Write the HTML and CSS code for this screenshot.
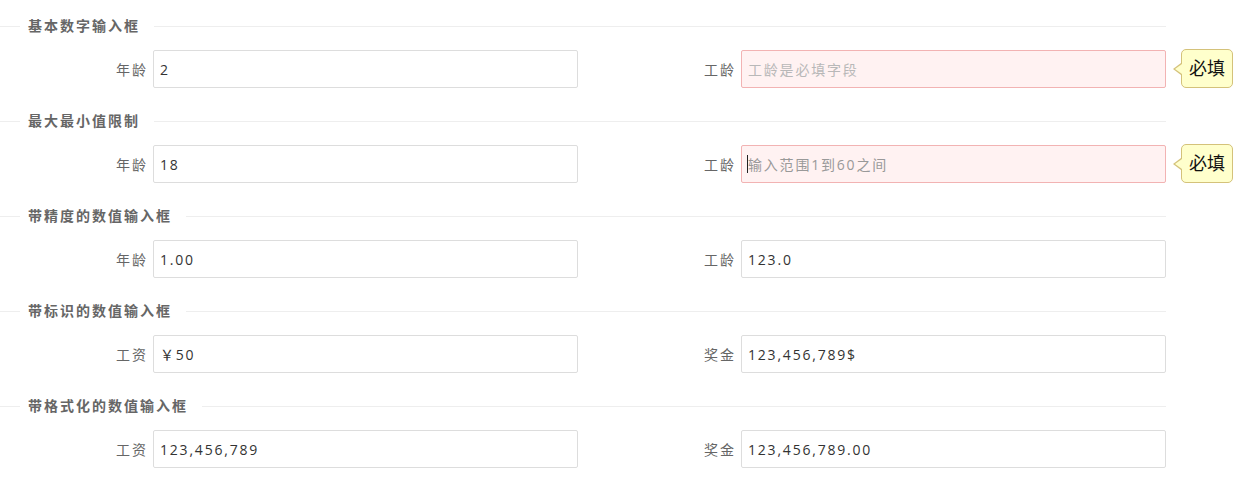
FILE: index.html
```html
<!DOCTYPE html>
<html lang="zh-CN">
<head>
    <meta charset="UTF-8">
    <title>数字输入框</title>
    <link rel="stylesheet" href="styles.css">
</head>
<body>
    <div id="page">
        <div class="title">基本数字输入框</div>
        <div class="row">
            <div class="item">
                <label>年龄</label>
                <div class="field"><input type="text" value="2"></div>
            </div>
            <div class="item">
                <label>工龄</label>
                <div class="field">
                    <input type="text" class="error" placeholder="工龄是必填字段">
                    <span class="tip">必填</span>
                </div>
            </div>
        </div>

        <div class="title">最大最小值限制</div>
        <div class="row">
            <div class="item">
                <label>年龄</label>
                <div class="field"><input type="text" value="18"></div>
            </div>
            <div class="item">
                <label>工龄</label>
                <div class="field">
                    <input type="text" class="error dark" placeholder="输入范围1到60之间">
                    <span class="caret"></span>
                    <span class="tip">必填</span>
                </div>
            </div>
        </div>

        <div class="title">带精度的数值输入框</div>
        <div class="row">
            <div class="item">
                <label>年龄</label>
                <div class="field"><input type="text" value="1.00"></div>
            </div>
            <div class="item">
                <label>工龄</label>
                <div class="field"><input type="text" value="123.0"></div>
            </div>
        </div>

        <div class="title">带标识的数值输入框</div>
        <div class="row">
            <div class="item">
                <label>工资</label>
                <div class="field"><input type="text" value="￥50"></div>
            </div>
            <div class="item">
                <label>奖金</label>
                <div class="field"><input type="text" value="123,456,789$"></div>
            </div>
        </div>

        <div class="title">带格式化的数值输入框</div>
        <div class="row">
            <div class="item">
                <label>工资</label>
                <div class="field"><input type="text" value="123,456,789"></div>
            </div>
            <div class="item">
                <label>奖金</label>
                <div class="field"><input type="text" value="123,456,789.00"></div>
            </div>
        </div>
    </div>
</body>
</html>
```

FILE: styles.css
```css
body
{
    margin: 0;
    font-family: "Open Sans", "Noto Sans CJK SC", sans-serif;
    font-size: 14px;
    color: #333;
    background: #fff;
}

#page
{
    width: 1166px;
    padding-top: 16px;
}

.title
{
    display: flex;
    align-items: center;
    height: 20px;
    line-height: 20px;
    font-size: 14px;
    letter-spacing: 2px;
    font-weight: bold;
    color: #666;
    margin-bottom: 14px;
}
.title::before
{
    content: "";
    width: 20px;
    border-top: 1px solid #eee;
    margin-right: 8px;
}
.title::after
{
    content: "";
    flex: 1;
    border-top: 1px solid #eee;
    margin-left: 14px;
}

.row
{
    display: grid;
    grid-template-columns: 578px 578px;
    column-gap: 10px;
    margin-bottom: 23px;
}

.item
{
    display: flex;
    align-items: center;
}

.item label
{
    width: 148px;
    margin-right: 5px;
    text-align: right;
    letter-spacing: 2px;
    color: #666;
}

.field
{
    position: relative;
    width: 425px;
}

.field input
{
    box-sizing: border-box;
    width: 425px;
    height: 38px;
    padding: 0 6px;
    border: 1px solid #ddd;
    border-radius: 2px;
    font-family: inherit;
    font-size: 14px;
    letter-spacing: 1.8px;
    color: #333;
    outline: none;
    background: #fff;
}

.field input.error
{
    background: #fff2f2;
    border-color: #f2b3b3;
}
.field input.error::placeholder
{
    color: #b8b8b8;
}
.field input.dark::placeholder
{
    color: #999;
}

.caret
{
    position: absolute;
    left: 6px;
    top: 10px;
    width: 1px;
    height: 18px;
    background: #222;
}

.tip
{
    position: absolute;
    left: 440px;
    top: -1px;
    box-sizing: border-box;
    width: 52px;
    height: 39px;
    line-height: 37px;
    text-align: center;
    font-size: 18px;
    color: #111;
    background: #ffffcc;
    border: 1px solid #d4c27a;
    border-radius: 5px;
}
.tip::before
{
    content: "";
    position: absolute;
    left: -9px;
    top: 13px;
    width: 0;
    height: 0;
    border-top: 6px solid transparent;
    border-bottom: 6px solid transparent;
    border-right: 8px solid #d4c27a;
}
.tip::after
{
    content: "";
    position: absolute;
    left: -7px;
    top: 14px;
    width: 0;
    height: 0;
    border-top: 5px solid transparent;
    border-bottom: 5px solid transparent;
    border-right: 7px solid #ffffcc;
}
```
